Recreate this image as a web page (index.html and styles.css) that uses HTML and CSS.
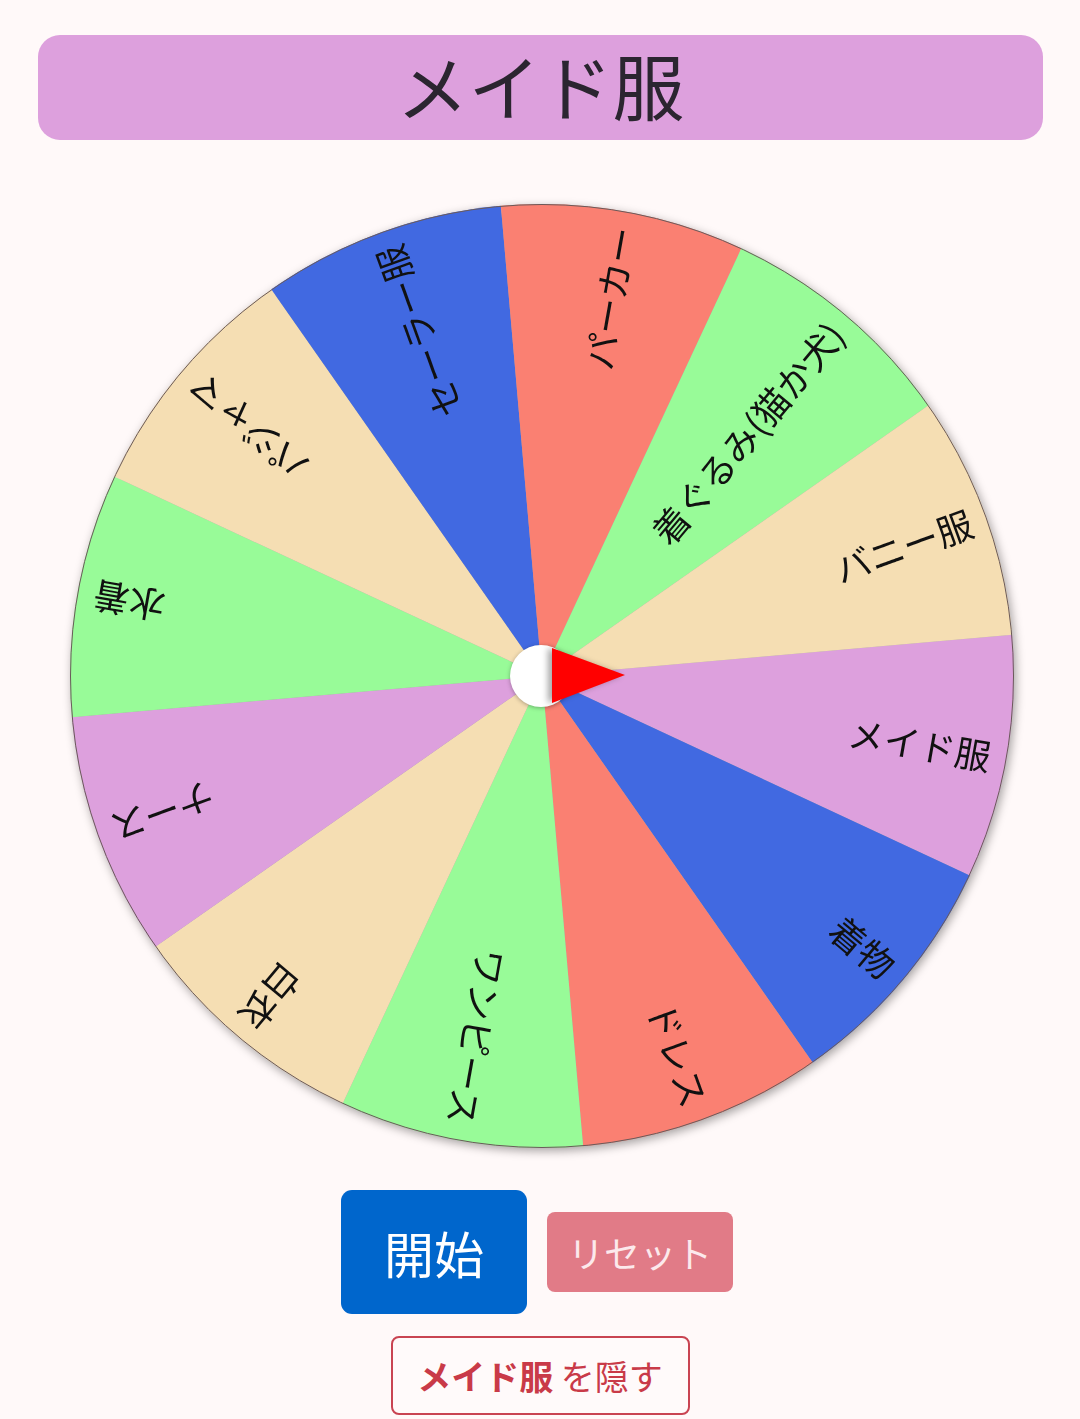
FILE: index.html
```html
<!DOCTYPE html>
<html lang="ja">
<head>
<meta charset="utf-8">
<title>ルーレット</title>
<link rel="stylesheet" href="styles.css">
</head>
<body>
<header class="result"><span class="result-text">メイド服</span></header>
<div class="wheel-wrap">
  <svg class="wheel" width="944" height="944" viewBox="-472 -472 944 944">
    <g class="segments">
      <path d="M0,0 L470.20,-41.14 A472,472 0 0 1 427.78,199.47 Z" fill="#DDA0DD"/>
      <path d="M0,0 L427.78,199.47 A472,472 0 0 1 270.73,386.64 Z" fill="#4169E1"/>
      <path d="M0,0 L270.73,386.64 A472,472 0 0 1 41.14,470.20 Z" fill="#FA8072"/>
      <path d="M0,0 L41.14,470.20 A472,472 0 0 1 -199.47,427.78 Z" fill="#98FB98"/>
      <path d="M0,0 L-199.47,427.78 A472,472 0 0 1 -386.64,270.73 Z" fill="#F5DEB3"/>
      <path d="M0,0 L-386.64,270.73 A472,472 0 0 1 -470.20,41.14 Z" fill="#DDA0DD"/>
      <path d="M0,0 L-470.20,41.14 A472,472 0 0 1 -427.78,-199.47 Z" fill="#98FB98"/>
      <path d="M0,0 L-427.78,-199.47 A472,472 0 0 1 -270.73,-386.64 Z" fill="#F5DEB3"/>
      <path d="M0,0 L-270.73,-386.64 A472,472 0 0 1 -41.14,-470.20 Z" fill="#4169E1"/>
      <path d="M0,0 L-41.14,-470.20 A472,472 0 0 1 199.47,-427.78 Z" fill="#FA8072"/>
      <path d="M0,0 L199.47,-427.78 A472,472 0 0 1 386.64,-270.73 Z" fill="#98FB98"/>
      <path d="M0,0 L386.64,-270.73 A472,472 0 0 1 470.20,-41.14 Z" fill="#F5DEB3"/>
    </g>
    <circle class="rim" cx="0" cy="0" r="471.5"/>
    <g class="labels">
      <text transform="rotate(10)" x="456" y="0">メイド服</text>
      <text transform="rotate(40)" x="456" y="0">着物</text>
      <text transform="rotate(70)" x="456" y="0">ドレス</text>
      <text transform="rotate(100)" x="456" y="0">ワンピース</text>
      <text transform="rotate(130)" x="456" y="0">白衣</text>
      <text transform="rotate(160)" x="456" y="0">ナース</text>
      <text transform="rotate(190)" x="456" y="0">水着</text>
      <text transform="rotate(220)" x="456" y="0">パジャマ</text>
      <text transform="rotate(250)" x="456" y="0">セーラー服</text>
      <text transform="rotate(280)" x="456" y="0">パーカー</text>
      <text transform="rotate(310)" x="456" y="0">着ぐるみ(猫か犬)</text>
      <text transform="rotate(340)" x="456" y="0">バニー服</text>
    </g>
  </svg>
  <svg class="pointer" width="944" height="944" viewBox="0 0 944 944">
    <circle class="hub" cx="471" cy="472" r="31"/>
    <polygon class="arrow" points="482,444 482,499 555,471"/>
  </svg>
</div>
<div class="controls">
  <button class="btn btn-start">開始</button>
  <button class="btn btn-reset">リセット</button>
</div>
<div class="hide-row">
  <button class="btn btn-hide"><b>メイド服</b> を隠す</button>
</div>
</body>
</html>
```
FILE: styles.css
```css
html, body {
  margin: 0;
  padding: 0;
}
body {
  background: #FFF9F9;
  font-family: "Noto Sans CJK JP", "Noto Sans", sans-serif;
  width: 1080px;
  height: 1419px;
  overflow: hidden;
}
.result {
  margin: 35px 37px 0 38px;
  height: 105px;
  background: #DDA0DD;
  border-radius: 22px;
  display: flex;
  align-items: center;
  justify-content: center;
  font-size: 72px;
  line-height: 1;
  color: #2b2530;
  font-weight: 400;
}
.result-text {
  padding-bottom: 8px;
}
.wheel-wrap {
  position: relative;
  width: 944px;
  height: 944px;
  margin: 64px 0 0 70px;
}
.wheel {
  display: block;
  overflow: visible;
  filter: drop-shadow(2px 3px 5px rgba(0,0,0,0.35));
}
.rim {
  fill: none;
  stroke: #6a5a5a;
  stroke-width: 1;
}
.labels text {
  font-family: "Noto Sans CJK JP", sans-serif;
  font-size: 36px;
  fill: #111;
  text-anchor: end;
  dominant-baseline: central;
}
.pointer {
  position: absolute;
  left: 0;
  top: 0;
  overflow: visible;
}
.hub {
  fill: #fff;
  filter: drop-shadow(0 1px 2px rgba(0,0,0,0.3));
}
.arrow {
  fill: #FF0000;
  filter: drop-shadow(-4px 0 3px rgba(0,0,0,0.35));
}
.controls {
  display: flex;
  justify-content: center;
  align-items: center;
  gap: 20px;
  margin-top: 42px;
  padding-right: 6px;
}
.btn {
  font-family: "Noto Sans CJK JP", "Noto Sans", sans-serif;
  border: none;
  cursor: pointer;
  padding: 0;
  line-height: 1;
}
.btn-start {
  width: 186px;
  height: 124px;
  background: #0066CC;
  color: #fff;
  font-size: 50px;
  border-radius: 11px;
}
.btn-reset {
  width: 186px;
  height: 80px;
  background: #E17B87;
  color: #FCE9EC;
  font-size: 36px;
  border-radius: 8px;
}
.hide-row {
  display: flex;
  justify-content: center;
  margin-top: 22px;
}
.btn-hide {
  width: 299px;
  height: 79px;
  background: #FFFAFA;
  border: 2px solid #C94452;
  border-radius: 8px;
  color: #C93A48;
  font-size: 34px;
}
.btn-hide b {
  font-weight: 700;
}
```
